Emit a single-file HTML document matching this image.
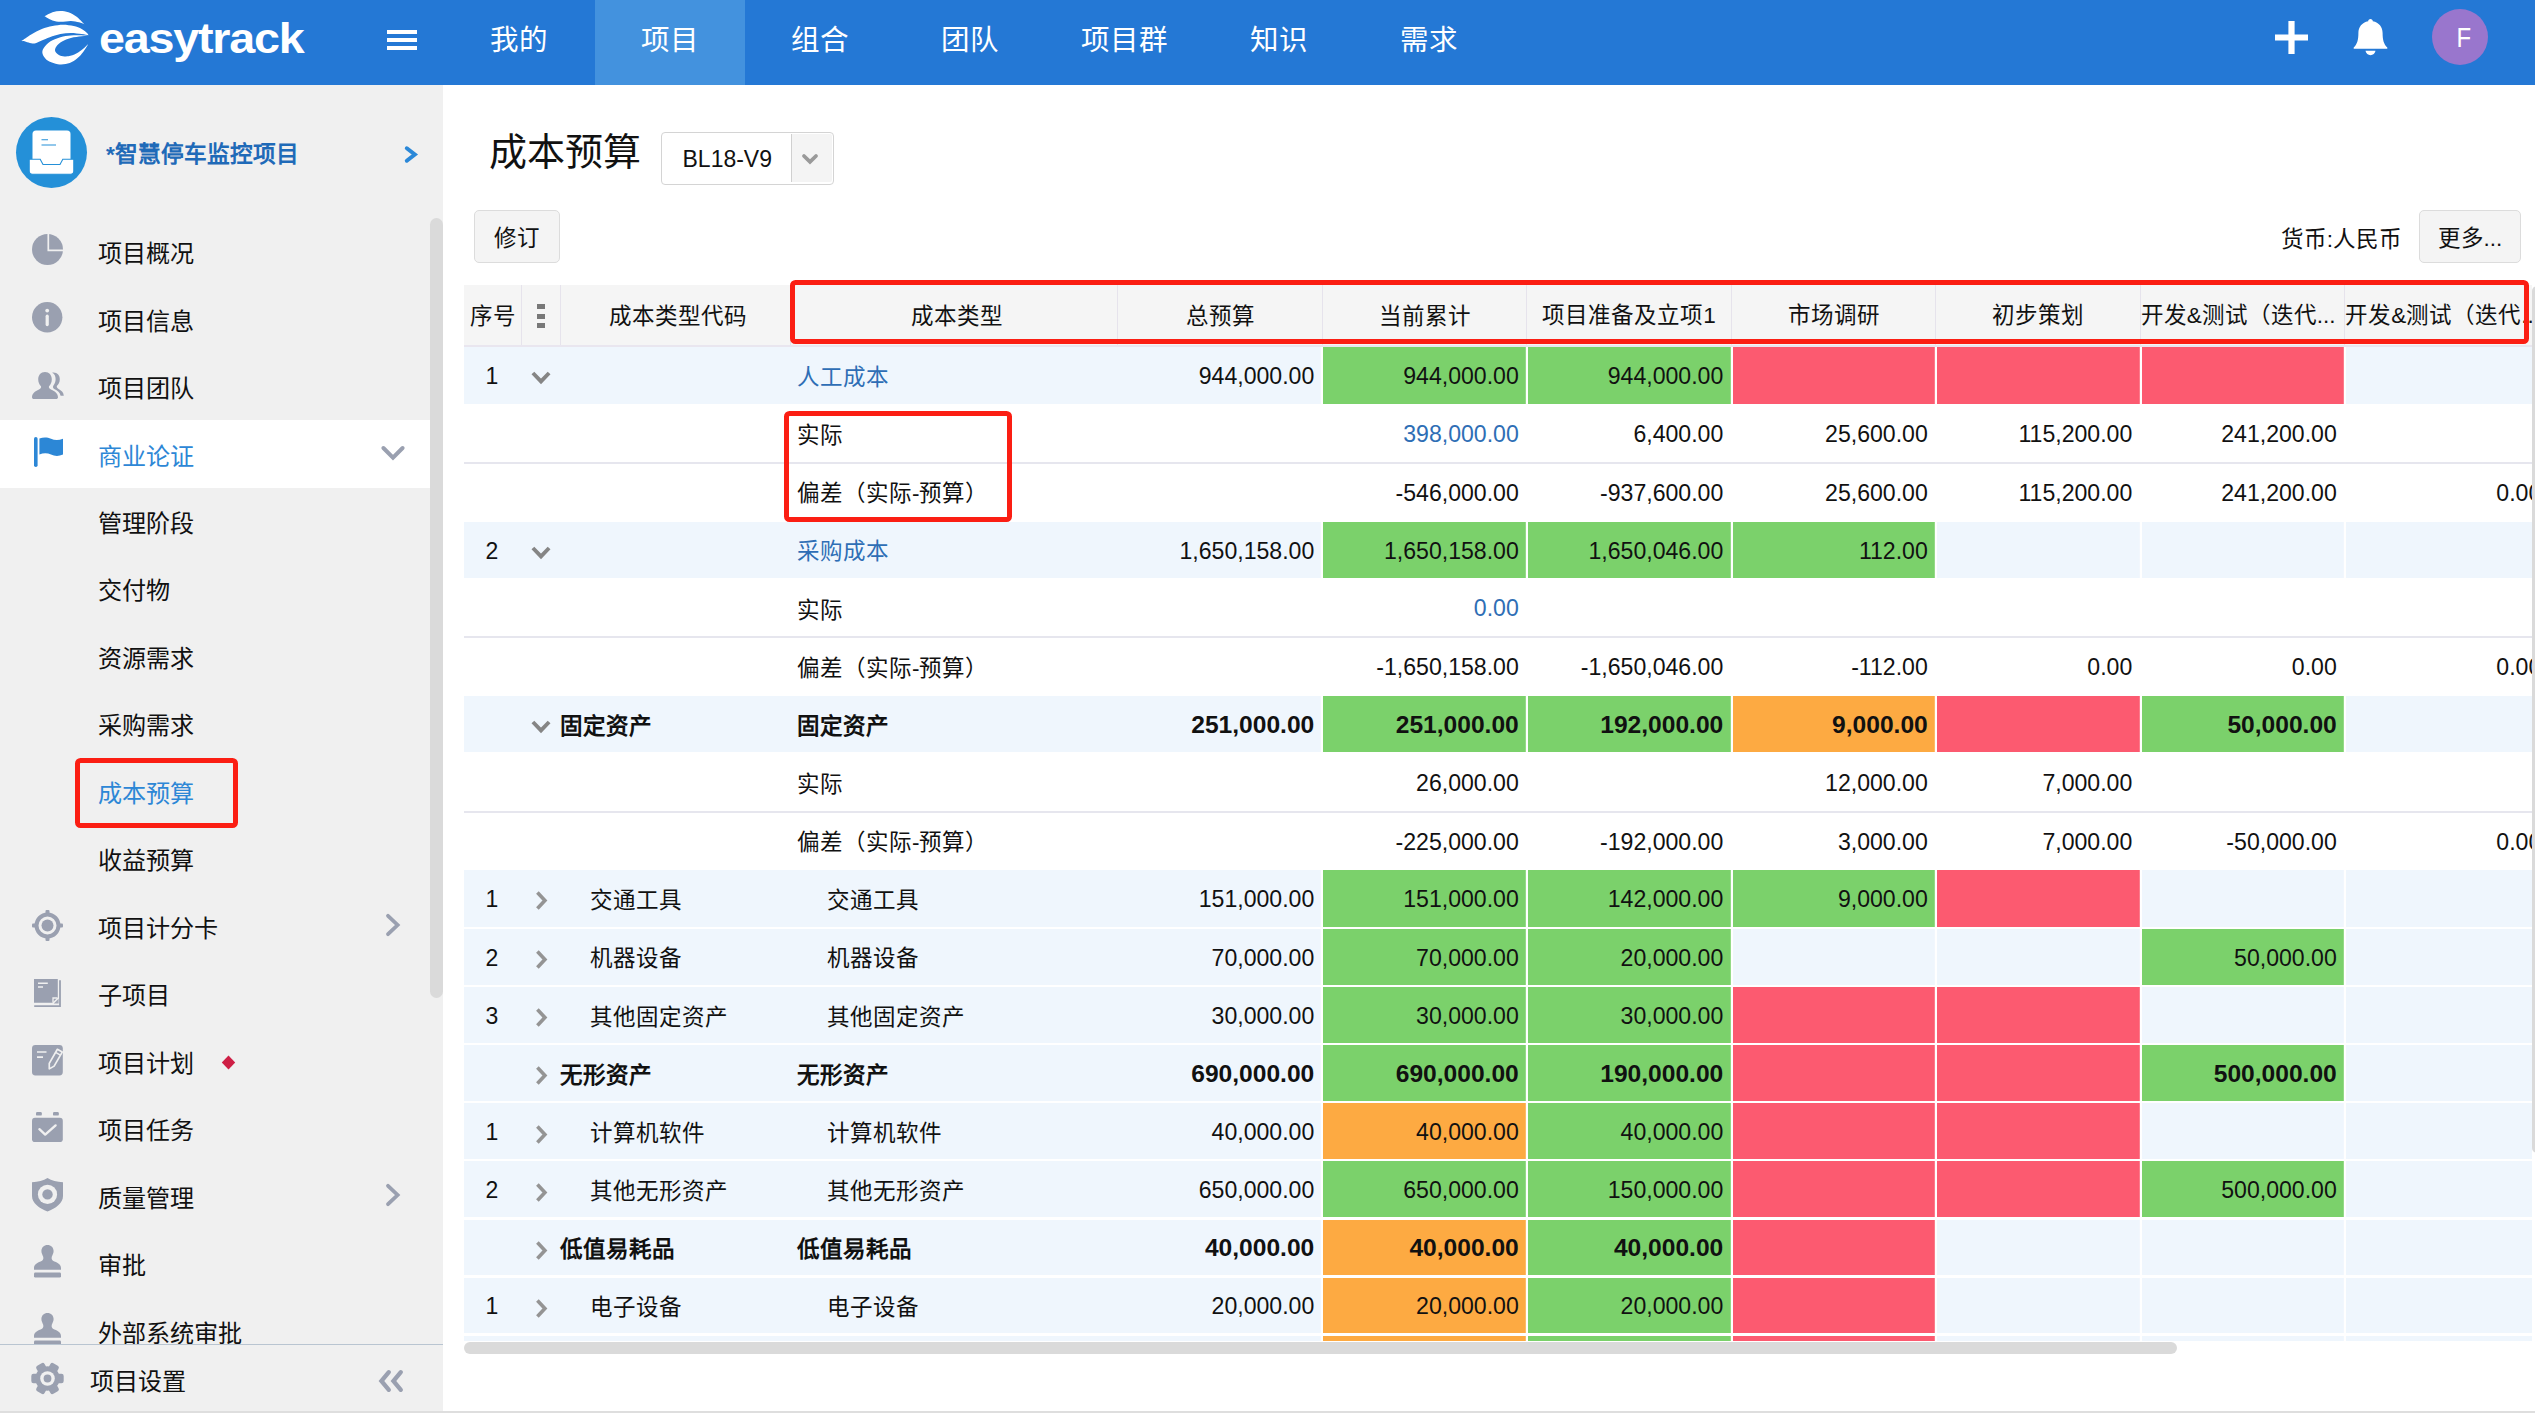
<!DOCTYPE html>
<html lang="zh-CN">
<head>
<meta charset="utf-8">
<title>成本预算</title>
<style>
html,body{margin:0;padding:0}
body{width:2535px;height:1413px;overflow:hidden;background:#fff;position:relative;font-family:"Liberation Sans",sans-serif;color:#111;-webkit-font-smoothing:antialiased}
div,span,i,svg{box-sizing:border-box}
.abs{position:absolute}
/* ---------- header ---------- */
#hdr{position:absolute;left:0;top:0;width:2535px;height:85px;background:#2478d5}
#logotxt{position:absolute;left:98.5px;top:7.5px;height:60px;line-height:60px;font-size:43px;font-weight:bold;color:#fff;letter-spacing:-1.1px;white-space:nowrap;transform:scaleX(1.085);transform-origin:0 50%}
.bar{position:absolute;left:387px;width:30px;height:4px;background:#fff}
.tab{position:absolute;top:0;height:85px;line-height:81.6px;text-align:center;color:#fff;font-size:28.5px;white-space:nowrap}
.tab.on{background:#4392de}
#avatar{position:absolute;left:2432px;top:9px;width:56px;height:56px;border-radius:50%;background:#9976cd;color:#fff;font-size:28.5px;line-height:57px;text-align:center;padding-left:7px}
#avatar span{display:inline-block;transform:scaleX(0.84)}
/* ---------- sidebar ---------- */
#side{position:absolute;left:0;top:85px;width:443px;height:1328px;background:#f0f0f0;overflow:hidden}
#proj{position:absolute;left:16px;top:32px;width:71px;height:71px;border-radius:50%;background:#2490d8}
#projname{position:absolute;left:106px;top:49.3px;height:40px;line-height:40px;font-size:22.7px;font-weight:bold;color:#1f6ab8;white-space:nowrap}
.mi{position:absolute;left:0;width:430px;height:67.46px;line-height:67.46px;font-size:24.1px;color:#111;white-space:nowrap}
.mi span{position:absolute;left:97.6px;top:1.3px}
.mi.on{background:#fff;color:#2d87d6;margin-top:-1.5px;height:68.3px}
.mi.on span{top:2.8px}
.mi.on svg{margin-top:1.5px}
.mi.cur{color:#2d87d6}
.mi svg{position:absolute}
#sscroll{position:absolute;left:430px;top:133px;width:13px;height:780px;border-radius:7px;background:#dadada}
#sfoot{position:absolute;left:0;top:1259px;width:443px;height:69px;background:#f0f0f0;border-top:1.5px solid #b9c5d1;font-size:24.1px;line-height:70px}
#sfoot span{position:absolute;left:90.3px;top:2px}
/* ---------- main ---------- */
#title{position:absolute;left:489px;top:123.7px;height:56px;line-height:56px;font-size:38px;color:#111;white-space:nowrap}
#ver{position:absolute;left:661px;top:132px;width:173px;height:53px;border:1.5px solid #d4d4d4;border-radius:4px;background:#fff}
#ver .t{position:absolute;left:20.5px;top:0;height:50px;line-height:53.2px;font-size:23px;color:#111}
#ver .b{position:absolute;right:0.8px;top:0.8px;width:41.2px;height:48.4px;background:#f4f4f4;border-left:1.5px solid #d0d0d0;border-radius:0 2px 2px 0}
.btn{position:absolute;top:210px;height:53px;border:1.5px solid #dcdcdc;border-radius:5px;background:#f4f4f4;font-size:22.5px;line-height:55.500px;text-align:center;color:#111;white-space:nowrap;overflow:hidden}
#cur{position:absolute;left:2200px;width:202px;top:213.500px;height:52px;line-height:52px;font-size:22.5px;text-align:right;white-space:nowrap;color:#111}
/* ---------- table ---------- */
#tbl{position:absolute;left:464px;top:285px;width:2068px;height:1056px;overflow:hidden;font-size:22.5px}
.thead{position:absolute;left:0;top:0;width:2100px;height:62px;background:#f5f5f5;border-bottom:2.2px solid #e9e6ef}
.th{position:absolute;top:0;height:60px;line-height:64.400px;text-align:center;white-space:nowrap;overflow:hidden;border-left:1.6px solid #e6e3ec}
.th:first-child{border-left:none}
.th.thl{text-align:left;padding-left:0px}
.th.ph{line-height:61px}
.dots{position:absolute;left:73px;top:19px;width:8px}
.dots i{display:block;width:7.5px;height:5px;background:#787878;margin-bottom:4.6px}
.tr{position:absolute;left:0;width:2100px;height:55.8px}
.trb{background:#eff6fd}
.trw{background:#fff}
.trw.ln{border-top:2px solid #e6e6ee;margin-top:-1.800px;height:57.800px}
.td{position:absolute;top:2.6px;height:56px;line-height:56px;white-space:nowrap}
.trw .td{top:2.700px}
.trw .td.num{top:0.300px}
.trw.ln .td{top:2.300px}
.trw.ln .td.num{top:1px}
.seq{left:0;width:56px;text-align:center;font-size:23px;top:0.800px}
.num{text-align:right;padding-right:7.500px;font-size:23.100px;z-index:2;top:0.800px}
.bold .num{font-size:24.600px}
.lk{color:#2e6eb5}
.bold{font-weight:bold}
.cell{position:absolute;top:0;height:100%;border-right:0;z-index:1}
.trb .cell{box-shadow:-2.200px 0 0 #fff}
.cv{position:absolute}
#hscroll{position:absolute;left:464px;top:1341.5px;width:1713px;height:12.5px;border-radius:7px;background:#dadada}
#vclip{position:absolute;left:2532px;top:286px;width:3px;height:867px;overflow:hidden}
#vscroll{position:absolute;left:0;top:0;width:10px;height:867px;border-radius:5px;background:#dadada}
html{overflow:hidden}
.red{position:absolute;border:5px solid #fb1e13;border-radius:5.500px;z-index:9}
#botline{position:absolute;left:0;top:1411px;width:2535px;height:2px;background:#dedede;z-index:10}
</style>
</head>
<body>
<!-- ================= header ================= -->
<div id="hdr">
  <svg class="abs" style="left:20px;top:10px" width="70" height="56" viewBox="20 10 70 56"><path fill="#fff" d="M44.5 16.2C45.8 15.5 49.9 13.1 52.5 12.2C55.1 11.3 57.8 10.9 60.4 10.9C63.0 10.9 65.8 11.3 68.4 12.2C71.1 13.1 73.7 14.5 76.3 16.5C78.9 18.5 83.0 22.9 84.3 24.2C83.4 23.9 81.2 22.8 79.0 22.3C76.8 21.8 74.1 21.1 71.0 21.0C67.9 20.9 63.5 21.9 60.4 21.8C57.3 21.7 55.1 21.3 52.5 20.4C49.9 19.5 45.8 16.9 44.5 16.2Z"/><path fill="#fff" d="M21.4 41.1C23.0 40.0 27.8 36.5 31.2 34.5C34.6 32.5 38.2 30.3 41.8 28.9C45.3 27.5 49.0 26.7 52.5 26.0C56.0 25.3 59.6 24.7 63.1 24.7C66.6 24.7 70.6 25.3 73.7 26.0C76.8 26.7 79.5 27.8 81.7 28.9C83.9 30.0 85.8 31.8 87.0 32.9C88.2 34.0 88.3 34.9 88.6 35.3C87.4 35.1 84.6 34.4 81.7 34.0C78.8 33.6 74.5 32.9 71.0 32.9C67.5 32.9 63.9 33.3 60.4 34.0C56.9 34.7 52.9 36.1 49.8 37.2C46.7 38.3 44.2 39.6 41.8 40.6C39.4 41.6 37.3 42.8 35.5 43.3C33.7 43.8 32.8 43.6 31.2 43.3C29.6 43.0 27.5 42.1 25.9 41.7C24.3 41.3 22.1 41.2 21.4 41.1Z"/><path fill="#fff" d="M88.0 35.6C85.6 35.5 77.9 35.1 73.7 35.3C69.5 35.5 66.6 35.8 63.1 36.6C59.6 37.4 55.3 38.9 52.5 40.3C49.7 41.7 47.8 43.3 46.1 45.1C44.4 46.9 42.8 49.0 42.4 51.0C42.0 53.0 42.9 55.0 44.0 56.8C45.1 58.6 47.0 60.4 49.3 61.6C51.6 62.8 55.1 63.8 57.8 64.2C60.5 64.6 63.1 64.5 65.7 64.0C68.4 63.5 71.2 62.5 73.7 61.0C76.2 59.5 78.6 57.2 80.6 55.2C82.5 53.2 84.1 50.6 85.4 48.8C86.7 46.9 87.8 44.9 88.3 44.1C87.5 44.9 85.2 47.2 83.2 48.8C81.2 50.4 78.8 52.4 76.3 53.6C73.8 54.9 71.1 55.9 68.4 56.3C65.8 56.6 62.5 56.4 60.4 55.7C58.3 55.0 56.4 53.3 55.6 52.0C54.8 50.7 54.8 49.4 55.6 47.8C56.4 46.2 58.3 44.0 60.4 42.5C62.5 41.0 65.3 39.7 68.4 38.7C71.5 37.7 75.7 37.1 79.0 36.6C82.3 36.1 86.5 35.8 88.0 35.6Z"/></svg>
  <div id="logotxt">easytrack</div>
  <div class="bar" style="top:30px"></div><div class="bar" style="top:38px"></div><div class="bar" style="top:46px"></div>
  <div class="tab" style="left:444px;width:150px">我的</div>
  <div class="tab on" style="left:595px;width:150px">项目</div>
  <div class="tab" style="left:745px;width:150px">组合</div>
  <div class="tab" style="left:895px;width:150px">团队</div>
  <div class="tab" style="left:1045px;width:159px">项目群</div>
  <div class="tab" style="left:1204px;width:150px">知识</div>
  <div class="tab" style="left:1354px;width:150px">需求</div>
  <svg class="abs" style="left:2275px;top:21px" width="33" height="33" viewBox="0 0 33 33"><path fill="#fff" d="M13.4 0h6.2v13.4H33v6.2H19.6V33h-6.2V19.6H0v-6.2h13.4z"/></svg>
  <svg class="abs" style="left:2353px;top:18px" width="35" height="39" viewBox="0 0 35 39">
    <path fill="#fff" d="M17.5 1 C18.8 1 19.8 2 19.8 3.2 C26 4.4 29.6 9 29.6 15 C29.6 21.5 30.6 26 34.3 29.6 L34.3 30.8 L0.7 30.8 L0.7 29.6 C4.4 26 5.4 21.5 5.4 15 C5.4 9 9 4.4 15.2 3.2 C15.2 2 16.2 1 17.5 1 Z"/>
    <path fill="#fff" d="M12.5 32.8 L22.5 32.8 C22 35.5 20 37.2 17.5 37.2 C15 37.2 13 35.5 12.5 32.8 Z"/>
  </svg>
  <div id="avatar"><span>F</span></div>
</div>
<!-- ================= sidebar ================= -->
<div id="side">
  <div id="proj">
    <svg class="abs" style="left:12px;top:12px" width="47" height="47" viewBox="0 0 47 47">
      <path fill="#fff" d="M8 1.5 h31 a3.5 3.5 0 0 1 3.500 3.500 V40 H4.500 V5 a3.500 3.500 0 0 1 3.500 -3.500 Z"/>
      <path fill="#2490d8" d="M13.500 10.200 h6.500 v1 h-6.500z M13.500 15.500 h14.500 v1 h-14.500z"/>
      <path fill="#fff" stroke="#2490d8" stroke-width="1.1" d="M1.200 30.200 H12.200 L15 35.500 H32 L34.800 30.200 H45.800 V42 a3.200 3.200 0 0 1 -3.200 3.200 H4.400 a3.200 3.200 0 0 1 -3.200 -3.200 Z"/>
    </svg>
  </div>
  <div id="projname">*智慧停车监控项目</div>
  <svg class="abs" style="left:402px;top:59px" width="20" height="22" viewBox="0 0 20 22"><path d="M4.8 4.25 L12.8 10.5 L4.8 16.75" fill="none" stroke="#2b88d8" stroke-width="4" stroke-linecap="round" stroke-linejoin="miter"/></svg>
  <div class="mi " style="top:133.90px"><svg style="left:32.3px;top:15.3px" width="32" height="32" viewBox="0 0 32 32"><circle cx="15.5" cy="15.5" r="15.5" fill="#9aa0b0"/><path d="M16.3 0 V16.4 H31.5" fill="none" stroke="#f0f0f0" stroke-width="1.7"/></svg><span>项目概况</span></div>
<div class="mi " style="top:201.36px"><svg style="left:32.3px;top:15.8px" width="31" height="31" viewBox="0 0 31 31"><circle cx="15.2" cy="15.2" r="15.2" fill="#9aa0b0"/><circle cx="15.2" cy="8.6" r="1.9" fill="#f0f0f0"/><rect x="13.6" y="12.6" width="3.2" height="11.6" rx="1.6" fill="#f0f0f0"/></svg><span>项目信息</span></div>
<div class="mi " style="top:268.82px"><svg style="left:31.7px;top:18.1px" width="32" height="27" viewBox="0 0 32 27"><g fill="#9aa0b0"><path d="M21.4 0.6 C25.6 0.6 27.8 3.6 27.8 7.2 C27.8 10.4 26.4 12.6 24.8 14 C24.6 15.4 25.4 16.4 27 17.3 C29.6 18.7 31.6 20.5 31.8 23.8 L28.6 23.8 C28 20.6 25.6 18.6 22.2 17 C20.8 16.2 20.6 14.6 21.6 13.2 C23 11.2 23.6 9.4 23.6 7 C23.6 4.2 22.6 2 20.2 0.8 C20.6 0.7 21 0.6 21.4 0.6 Z"/><path d="M13 0 C17.2 0 19.8 3.2 19.8 7.2 C19.8 10.2 18.6 12.6 17 14.2 C16.6 15.6 17.2 16.6 19 17.4 C23.2 19.2 26 21.4 26 25.2 C26 26.4 25.2 27 24 27 L2 27 C0.8 27 0 26.4 0 25.2 C0 21.4 2.8 19.2 7 17.4 C8.8 16.6 9.4 15.6 9 14.2 C7.4 12.6 6.2 10.2 6.2 7.2 C6.2 3.2 8.8 0 13 0 Z"/></g></svg><span>项目团队</span></div>
<div class="mi on" style="top:336.28px"><svg style="left:34px;top:15.6px" width="29" height="30" viewBox="0 0 29 30"><rect x="0" y="0" width="3.6" height="30" rx="1.8" fill="#2c87d6"/><path fill="#2c87d6" d="M5.4 1.6 C9.5 -0.2 13.5 0.2 17 1.8 C20.5 3.4 24.5 3.6 29 1.8 L29 17.6 C24.5 19.6 20.5 19.2 17 17.6 C13.5 16 9.5 15.8 5.4 17.6 Z"/></svg><svg style="left:380px;top:23.7px" width="26" height="17" viewBox="0 0 26 17"><path d="M3.400 3 L13 12.600 L22.600 3" fill="none" stroke="#9aa0b0" stroke-width="4" stroke-linecap="round" stroke-linejoin="miter"/></svg><span>商业论证</span></div>
<div class="mi " style="top:403.74px"><span>管理阶段</span></div>
<div class="mi " style="top:471.20px"><span>交付物</span></div>
<div class="mi " style="top:538.66px"><span>资源需求</span></div>
<div class="mi " style="top:606.12px"><span>采购需求</span></div>
<div class="mi cur" style="top:673.58px"><span>成本预算</span></div>
<div class="mi " style="top:741.04px"><span>收益预算</span></div>
<div class="mi " style="top:808.50px"><svg style="left:32.2px;top:16.3px" width="31" height="31" viewBox="0 0 31 31"><circle cx="15.5" cy="15.5" r="11" fill="none" stroke="#9aa0b0" stroke-width="4"/><circle cx="15.5" cy="15.5" r="6" fill="#9aa0b0"/><g fill="#9aa0b0"><rect x="13.5" y="0" width="4" height="4" rx="1"/><rect x="13.5" y="27" width="4" height="4" rx="1"/><rect x="0" y="13.5" width="4" height="4" rx="1"/><rect x="27" y="13.5" width="4" height="4" rx="1"/></g></svg><svg style="left:385px;top:19.5px" width="17" height="24" viewBox="0 0 17 24"><path d="M3 2.800 L12.600 12 L3 21.200" fill="none" stroke="#9aa0b0" stroke-width="3.800" stroke-linecap="round" stroke-linejoin="miter"/></svg><span>项目计分卡</span></div>
<div class="mi " style="top:875.96px"><svg style="left:34px;top:17.8px" width="27.5" height="28.5" viewBox="0 0 27.5 28.5"><path fill="#9aa0b0" d="M0 0 H23.8 V18.4 L18.4 23.8 H0 Z"/><path fill="#9aa0b0" d="M19.8 24.6 L24.6 19.8 L24.6 24.6 Z" opacity="0.9"/><path fill="none" stroke="#f0f0f0" stroke-width="1.3" d="M19 23.5 V19 H23.5"/><path d="M4 4.2 H13.8 M4 8 H9" stroke="#f0f0f0" stroke-width="1.5" fill="none"/><path d="M26 1.2 V27.2 H0.2" stroke="#9aa0b0" stroke-width="1.8" fill="none"/></svg><span>子项目</span></div>
<div class="mi " style="top:943.42px"><svg style="left:32.3px;top:16.6px" width="31" height="31" viewBox="0 0 31 31"><rect x="0" y="0" width="30.8" height="30.4" rx="3.4" fill="#9aa0b0"/><path d="M5 7 H14.5 M5 12.2 H11" stroke="#f0f0f0" stroke-width="1.7" fill="none"/><g transform="rotate(30 23 14)"><path d="M20.2 4.4 h5.6 v16.2 l-2.8 4.8 l-2.8 -4.8 Z" fill="#9aa0b0" stroke="#f0f0f0" stroke-width="1.7" stroke-linejoin="round"/><path d="M20.2 8 h5.6" stroke="#f0f0f0" stroke-width="1.4"/></g></svg><svg style="left:220.500px;top:26.500px" width="15" height="15" viewBox="0 0 15 15"><path d="M7.500 0.400 L14.200 7.500 L7.500 14.600 L0.800 7.500 Z" fill="#ce1f45"/></svg><span>项目计划</span></div>
<div class="mi " style="top:1010.88px"><svg style="left:32.3px;top:16.1px" width="31" height="30.5" viewBox="0 0 31 30.5"><rect x="0" y="5.8" width="30.8" height="24.4" rx="3" fill="#9aa0b0"/><rect x="4" y="0" width="5.8" height="3.6" rx="1.2" fill="#9aa0b0"/><rect x="21" y="0" width="5.8" height="3.6" rx="1.2" fill="#9aa0b0"/><path d="M7.4 17.2 L13.2 22.6 L23.6 13.4" fill="none" stroke="#f0f0f0" stroke-width="2.4" stroke-linecap="round" stroke-linejoin="round"/></svg><span>项目任务</span></div>
<div class="mi " style="top:1078.34px"><svg style="left:32px;top:15px" width="31" height="34" viewBox="0 0 31 34"><path fill="#9aa0b0" d="M15.5 0 C19.5 2.6 25 4 31 4.2 V18 C31 25.4 23.5 30.4 15.5 33.6 C7.5 30.4 0 25.4 0 18 V4.2 C6 4 11.500 2.600 15.500 0 Z"/><circle cx="15.500" cy="16.400" r="9.600" fill="#f0f0f0"/><circle cx="15.500" cy="16.400" r="5.200" fill="#9aa0b0"/></svg><svg style="left:385px;top:19.5px" width="17" height="24" viewBox="0 0 17 24"><path d="M3 2.800 L12.600 12 L3 21.200" fill="none" stroke="#9aa0b0" stroke-width="3.800" stroke-linecap="round" stroke-linejoin="miter"/></svg><span>质量管理</span></div>
<div class="mi " style="top:1145.80px"><svg style="left:34px;top:14.1px" width="27" height="33" viewBox="0 0 27 33"><path fill="#9aa0b0" d="M13.500 0 C17 0 19.600 2.600 19.600 6 C19.600 8.400 18.400 10 17.800 11.800 C17.200 14 18 15.600 20.400 16.600 C24.600 18.200 27 19.800 27 23.400 V24.800 H0 V23.400 C0 19.800 2.400 18.200 6.600 16.600 C9 15.600 9.800 14 9.200 11.800 C8.600 10 7.400 8.400 7.400 6 C7.400 2.600 10 0 13.500 0 Z"/><rect x="0" y="27.400" width="27" height="5.200" rx="1.400" fill="#9aa0b0"/></svg><span>审批</span></div>
<div class="mi " style="top:1213.26px"><svg style="left:34px;top:14.6px" width="27" height="33" viewBox="0 0 27 33"><path fill="#9aa0b0" d="M13.500 0 C17 0 19.600 2.600 19.600 6 C19.600 8.400 18.400 10 17.800 11.800 C17.200 14 18 15.600 20.400 16.600 C24.600 18.200 27 19.800 27 23.400 V24.800 H0 V23.400 C0 19.800 2.400 18.200 6.600 16.600 C9 15.600 9.800 14 9.200 11.800 C8.600 10 7.400 8.400 7.400 6 C7.400 2.600 10 0 13.500 0 Z"/><rect x="0" y="27.400" width="27" height="5.200" rx="1.400" fill="#9aa0b0"/></svg><span>外部系统审批</span></div>
  <div id="sscroll"></div>
  <div id="sfoot">
    <svg class="abs" style="left:31px;top:17px" width="33" height="33" viewBox="0 0 33 33">
      <g fill="#9aa0b0" transform="rotate(30 16.5 16.5)"><circle cx="16.500" cy="16.500" r="12.200"/>
      <g id="gt"><rect x="11.800" y="0.300" width="9.400" height="9" rx="2.200"/></g>
      <use href="#gt" transform="rotate(60 16.500 16.500)"/><use href="#gt" transform="rotate(120 16.500 16.500)"/><use href="#gt" transform="rotate(180 16.500 16.500)"/><use href="#gt" transform="rotate(240 16.500 16.500)"/><use href="#gt" transform="rotate(300 16.500 16.500)"/></g>
      <circle cx="16.500" cy="16.500" r="7.300" fill="#f0f0f0"/><circle cx="16.500" cy="16.500" r="3.900" fill="#9aa0b0"/>
    </svg>
    <span>项目设置</span>
    <svg class="abs" style="left:377px;top:23px" width="28" height="26" viewBox="0 0 28 26"><path d="M11.8 4.2 L4.4 13 L11.8 21.8 M23.8 4.2 L16.400 13 L23.800 21.800" fill="none" stroke="#9aa0b0" stroke-width="4.300" stroke-linecap="round" stroke-linejoin="miter"/></svg>
  </div>
</div>
<!-- ================= main ================= -->
<div id="title">成本预算</div>
<div id="ver"><div class="t">BL18-V9</div><div class="b"><svg class="abs" style="left:9.000px;top:18.800px" width="18" height="13" viewBox="0 0 18 13"><path d="M3 3 L9 8.800 L15 3" fill="none" stroke="#9a9a9a" stroke-width="3.800" stroke-linecap="round"/></svg></div></div>
<div class="btn" style="left:474px;width:86px">修订</div>
<div id="cur">货币:人民币</div>
<div class="btn" style="left:2419px;width:102px">更多...</div>
<div id="tbl">
<div class="thead">
<div class="th" style="left:0.0px;width:57.0px">序号</div>
<div class="th" style="left:57.0px;width:39.0px"></div>
<div class="th" style="left:96.0px;width:230.0px;padding-left:4.6px">成本类型代码</div>
<div class="th" style="left:326.0px;width:327.3px;padding-left:5.4px">成本类型</div>
<div class="th" style="left:653.3px;width:204.5px">总预算</div>
<div class="th" style="left:857.8px;width:204.5px">当前累计</div>
<div class="th ph" style="left:1062.3px;width:204.5px">项目准备及立项1</div>
<div class="th ph" style="left:1266.8px;width:204.5px">市场调研</div>
<div class="th ph" style="left:1471.3px;width:204.5px">初步策划</div>
<div class="th thl ph" style="left:1675.8px;width:204.5px">开发&amp;测试（迭代...</div>
<div class="th thl ph" style="left:1880.3px;width:204.5px">开发&amp;测试（迭代...</div>
<div class="dots"><i></i><i></i><i></i></div>
</div>
<div class="tr trb" style="top:62.00px;height:56.8px">
<div class="td seq">1</div>
<svg class="cv" style="left:66.89999999999998px;top:24.0px" width="20" height="14" viewBox="0 0 20 14"><path d="M1.9 2.0 L10 10.4 L18.1 2.0" fill="none" stroke="#858585" stroke-width="3.9" stroke-linecap="butt" stroke-linejoin="miter"/></svg>
<div class="td type lk" style="left:333px">人工成本</div>
<div class="td num" style="left:653.3px;width:204.5px">944,000.00</div>
<div class="cell" style="left:858.8px;width:203.3px;background:#7bd16b;"></div>
<div class="td num " style="left:857.8px;width:204.5px">944,000.00</div>
<div class="cell" style="left:1064.1px;width:202.5px;background:#7bd16b;"></div>
<div class="td num " style="left:1062.3px;width:204.5px">944,000.00</div>
<div class="cell" style="left:1268.6px;width:202.5px;background:#fc5a70;"></div>
<div class="cell" style="left:1473.1px;width:202.5px;background:#fc5a70;"></div>
<div class="cell" style="left:1677.6px;width:202.5px;background:#fc5a70;"></div>
<div class="cell" style="left:1882.1px;width:202.5px;"></div>
</div>
<div class="tr trw" style="top:120.45px">
<div class="td type" style="left:333px">实际</div>
<div class="td num lk" style="left:857.8px;width:204.5px">398,000.00</div>
<div class="td num " style="left:1062.3px;width:204.5px">6,400.00</div>
<div class="td num " style="left:1266.8px;width:204.5px">25,600.00</div>
<div class="td num " style="left:1471.3px;width:204.5px">115,200.00</div>
<div class="td num " style="left:1675.8px;width:204.5px">241,200.00</div>
</div>
<div class="tr trw ln" style="top:178.60px">
<div class="td type" style="left:333px">偏差（实际-预算）</div>
<div class="td num " style="left:857.8px;width:204.5px">-546,000.00</div>
<div class="td num " style="left:1062.3px;width:204.5px">-937,600.00</div>
<div class="td num " style="left:1266.8px;width:204.5px">25,600.00</div>
<div class="td num " style="left:1471.3px;width:204.5px">115,200.00</div>
<div class="td num " style="left:1675.8px;width:204.5px">241,200.00</div>
<div class="td num " style="left:1880.3px;width:204.5px">0.00</div>
</div>
<div class="tr trb" style="top:236.75px">
<div class="td seq">2</div>
<svg class="cv" style="left:66.89999999999998px;top:24.0px" width="20" height="14" viewBox="0 0 20 14"><path d="M1.9 2.0 L10 10.4 L18.1 2.0" fill="none" stroke="#858585" stroke-width="3.9" stroke-linecap="butt" stroke-linejoin="miter"/></svg>
<div class="td type lk" style="left:333px">采购成本</div>
<div class="td num" style="left:653.3px;width:204.5px">1,650,158.00</div>
<div class="cell" style="left:858.8px;width:203.3px;background:#7bd16b;"></div>
<div class="td num " style="left:857.8px;width:204.5px">1,650,158.00</div>
<div class="cell" style="left:1064.1px;width:202.5px;background:#7bd16b;"></div>
<div class="td num " style="left:1062.3px;width:204.5px">1,650,046.00</div>
<div class="cell" style="left:1268.6px;width:202.5px;background:#7bd16b;"></div>
<div class="td num " style="left:1266.8px;width:204.5px">112.00</div>
<div class="cell" style="left:1473.1px;width:202.5px;"></div>
<div class="cell" style="left:1677.6px;width:202.5px;"></div>
<div class="cell" style="left:1882.1px;width:202.5px;"></div>
</div>
<div class="tr trw" style="top:294.90px">
<div class="td type" style="left:333px">实际</div>
<div class="td num lk" style="left:857.8px;width:204.5px">0.00</div>
</div>
<div class="tr trw ln" style="top:353.05px">
<div class="td type" style="left:333px">偏差（实际-预算）</div>
<div class="td num " style="left:857.8px;width:204.5px">-1,650,158.00</div>
<div class="td num " style="left:1062.3px;width:204.5px">-1,650,046.00</div>
<div class="td num " style="left:1266.8px;width:204.5px">-112.00</div>
<div class="td num " style="left:1471.3px;width:204.5px">0.00</div>
<div class="td num " style="left:1675.8px;width:204.5px">0.00</div>
<div class="td num " style="left:1880.3px;width:204.5px">0.00</div>
</div>
<div class="tr trb bold" style="top:411.20px">
<svg class="cv" style="left:66.89999999999998px;top:24.0px" width="20" height="14" viewBox="0 0 20 14"><path d="M1.9 2.0 L10 10.4 L18.1 2.0" fill="none" stroke="#858585" stroke-width="3.9" stroke-linecap="butt" stroke-linejoin="miter"/></svg>
<div class="td code" style="left:95.7px">固定资产</div>
<div class="td type" style="left:333px">固定资产</div>
<div class="td num" style="left:653.3px;width:204.5px">251,000.00</div>
<div class="cell" style="left:858.8px;width:203.3px;background:#7bd16b;"></div>
<div class="td num " style="left:857.8px;width:204.5px">251,000.00</div>
<div class="cell" style="left:1064.1px;width:202.5px;background:#7bd16b;"></div>
<div class="td num " style="left:1062.3px;width:204.5px">192,000.00</div>
<div class="cell" style="left:1268.6px;width:202.5px;background:#fdaa42;"></div>
<div class="td num " style="left:1266.8px;width:204.5px">9,000.00</div>
<div class="cell" style="left:1473.1px;width:202.5px;background:#fc5a70;"></div>
<div class="cell" style="left:1677.6px;width:202.5px;background:#7bd16b;"></div>
<div class="td num " style="left:1675.8px;width:204.5px">50,000.00</div>
<div class="cell" style="left:1882.1px;width:202.5px;"></div>
</div>
<div class="tr trw" style="top:469.35px">
<div class="td type" style="left:333px">实际</div>
<div class="td num " style="left:857.8px;width:204.5px">26,000.00</div>
<div class="td num " style="left:1266.8px;width:204.5px">12,000.00</div>
<div class="td num " style="left:1471.3px;width:204.5px">7,000.00</div>
</div>
<div class="tr trw ln" style="top:527.50px">
<div class="td type" style="left:333px">偏差（实际-预算）</div>
<div class="td num " style="left:857.8px;width:204.5px">-225,000.00</div>
<div class="td num " style="left:1062.3px;width:204.5px">-192,000.00</div>
<div class="td num " style="left:1266.8px;width:204.5px">3,000.00</div>
<div class="td num " style="left:1471.3px;width:204.5px">7,000.00</div>
<div class="td num " style="left:1675.8px;width:204.5px">-50,000.00</div>
<div class="td num " style="left:1880.3px;width:204.5px">0.00</div>
</div>
<div class="tr trb" style="top:585.05px;height:57.2px">
<div class="td seq">1</div>
<svg class="cv" style="left:70.70000000000005px;top:21.4px" width="13" height="19" viewBox="0 0 13 19"><path d="M2.4 1.5 L9.9 9.5 L2.4 17.5" fill="none" stroke="#949494" stroke-width="3.6" stroke-linecap="butt" stroke-linejoin="miter"/></svg>
<div class="td code" style="left:125.7px">交通工具</div>
<div class="td type" style="left:363px">交通工具</div>
<div class="td num" style="left:653.3px;width:204.5px">151,000.00</div>
<div class="cell" style="left:858.8px;width:203.3px;background:#7bd16b;"></div>
<div class="td num " style="left:857.8px;width:204.5px">151,000.00</div>
<div class="cell" style="left:1064.1px;width:202.5px;background:#7bd16b;"></div>
<div class="td num " style="left:1062.3px;width:204.5px">142,000.00</div>
<div class="cell" style="left:1268.6px;width:202.5px;background:#7bd16b;"></div>
<div class="td num " style="left:1266.8px;width:204.5px">9,000.00</div>
<div class="cell" style="left:1473.1px;width:202.5px;background:#fc5a70;"></div>
<div class="cell" style="left:1677.6px;width:202.5px;"></div>
<div class="cell" style="left:1882.1px;width:202.5px;"></div>
</div>
<div class="tr trb" style="top:643.80px">
<div class="td seq">2</div>
<svg class="cv" style="left:70.70000000000005px;top:21.4px" width="13" height="19" viewBox="0 0 13 19"><path d="M2.4 1.5 L9.9 9.5 L2.4 17.5" fill="none" stroke="#949494" stroke-width="3.6" stroke-linecap="butt" stroke-linejoin="miter"/></svg>
<div class="td code" style="left:125.7px">机器设备</div>
<div class="td type" style="left:363px">机器设备</div>
<div class="td num" style="left:653.3px;width:204.5px">70,000.00</div>
<div class="cell" style="left:858.8px;width:203.3px;background:#7bd16b;"></div>
<div class="td num " style="left:857.8px;width:204.5px">70,000.00</div>
<div class="cell" style="left:1064.1px;width:202.5px;background:#7bd16b;"></div>
<div class="td num " style="left:1062.3px;width:204.5px">20,000.00</div>
<div class="cell" style="left:1268.6px;width:202.5px;"></div>
<div class="cell" style="left:1473.1px;width:202.5px;"></div>
<div class="cell" style="left:1677.6px;width:202.5px;background:#7bd16b;"></div>
<div class="td num " style="left:1675.8px;width:204.5px">50,000.00</div>
<div class="cell" style="left:1882.1px;width:202.5px;"></div>
</div>
<div class="tr trb" style="top:701.95px">
<div class="td seq">3</div>
<svg class="cv" style="left:70.70000000000005px;top:21.4px" width="13" height="19" viewBox="0 0 13 19"><path d="M2.4 1.5 L9.9 9.5 L2.4 17.5" fill="none" stroke="#949494" stroke-width="3.6" stroke-linecap="butt" stroke-linejoin="miter"/></svg>
<div class="td code" style="left:125.7px">其他固定资产</div>
<div class="td type" style="left:363px">其他固定资产</div>
<div class="td num" style="left:653.3px;width:204.5px">30,000.00</div>
<div class="cell" style="left:858.8px;width:203.3px;background:#7bd16b;"></div>
<div class="td num " style="left:857.8px;width:204.5px">30,000.00</div>
<div class="cell" style="left:1064.1px;width:202.5px;background:#7bd16b;"></div>
<div class="td num " style="left:1062.3px;width:204.5px">30,000.00</div>
<div class="cell" style="left:1268.6px;width:202.5px;background:#fc5a70;"></div>
<div class="cell" style="left:1473.1px;width:202.5px;background:#fc5a70;"></div>
<div class="cell" style="left:1677.6px;width:202.5px;"></div>
<div class="cell" style="left:1882.1px;width:202.5px;"></div>
</div>
<div class="tr trb bold" style="top:760.10px">
<svg class="cv" style="left:70.70000000000005px;top:21.4px" width="13" height="19" viewBox="0 0 13 19"><path d="M2.4 1.5 L9.9 9.5 L2.4 17.5" fill="none" stroke="#949494" stroke-width="3.6" stroke-linecap="butt" stroke-linejoin="miter"/></svg>
<div class="td code" style="left:95.7px">无形资产</div>
<div class="td type" style="left:333px">无形资产</div>
<div class="td num" style="left:653.3px;width:204.5px">690,000.00</div>
<div class="cell" style="left:858.8px;width:203.3px;background:#7bd16b;"></div>
<div class="td num " style="left:857.8px;width:204.5px">690,000.00</div>
<div class="cell" style="left:1064.1px;width:202.5px;background:#7bd16b;"></div>
<div class="td num " style="left:1062.3px;width:204.5px">190,000.00</div>
<div class="cell" style="left:1268.6px;width:202.5px;background:#fc5a70;"></div>
<div class="cell" style="left:1473.1px;width:202.5px;background:#fc5a70;"></div>
<div class="cell" style="left:1677.6px;width:202.5px;background:#7bd16b;"></div>
<div class="td num " style="left:1675.8px;width:204.5px">500,000.00</div>
<div class="cell" style="left:1882.1px;width:202.5px;"></div>
</div>
<div class="tr trb" style="top:818.25px">
<div class="td seq">1</div>
<svg class="cv" style="left:70.70000000000005px;top:21.4px" width="13" height="19" viewBox="0 0 13 19"><path d="M2.4 1.5 L9.9 9.5 L2.4 17.5" fill="none" stroke="#949494" stroke-width="3.6" stroke-linecap="butt" stroke-linejoin="miter"/></svg>
<div class="td code" style="left:125.7px">计算机软件</div>
<div class="td type" style="left:363px">计算机软件</div>
<div class="td num" style="left:653.3px;width:204.5px">40,000.00</div>
<div class="cell" style="left:858.8px;width:203.3px;background:#fdaa42;"></div>
<div class="td num " style="left:857.8px;width:204.5px">40,000.00</div>
<div class="cell" style="left:1064.1px;width:202.5px;background:#7bd16b;"></div>
<div class="td num " style="left:1062.3px;width:204.5px">40,000.00</div>
<div class="cell" style="left:1268.6px;width:202.5px;background:#fc5a70;"></div>
<div class="cell" style="left:1473.1px;width:202.5px;background:#fc5a70;"></div>
<div class="cell" style="left:1677.6px;width:202.5px;"></div>
<div class="cell" style="left:1882.1px;width:202.5px;"></div>
</div>
<div class="tr trb" style="top:876.40px">
<div class="td seq">2</div>
<svg class="cv" style="left:70.70000000000005px;top:21.4px" width="13" height="19" viewBox="0 0 13 19"><path d="M2.4 1.5 L9.9 9.5 L2.4 17.5" fill="none" stroke="#949494" stroke-width="3.6" stroke-linecap="butt" stroke-linejoin="miter"/></svg>
<div class="td code" style="left:125.7px">其他无形资产</div>
<div class="td type" style="left:363px">其他无形资产</div>
<div class="td num" style="left:653.3px;width:204.5px">650,000.00</div>
<div class="cell" style="left:858.8px;width:203.3px;background:#7bd16b;"></div>
<div class="td num " style="left:857.8px;width:204.5px">650,000.00</div>
<div class="cell" style="left:1064.1px;width:202.5px;background:#7bd16b;"></div>
<div class="td num " style="left:1062.3px;width:204.5px">150,000.00</div>
<div class="cell" style="left:1268.6px;width:202.5px;background:#fc5a70;"></div>
<div class="cell" style="left:1473.1px;width:202.5px;background:#fc5a70;"></div>
<div class="cell" style="left:1677.6px;width:202.5px;background:#7bd16b;"></div>
<div class="td num " style="left:1675.8px;width:204.5px">500,000.00</div>
<div class="cell" style="left:1882.1px;width:202.5px;"></div>
</div>
<div class="tr trb bold" style="top:934.55px">
<svg class="cv" style="left:70.70000000000005px;top:21.4px" width="13" height="19" viewBox="0 0 13 19"><path d="M2.4 1.5 L9.9 9.5 L2.4 17.5" fill="none" stroke="#949494" stroke-width="3.6" stroke-linecap="butt" stroke-linejoin="miter"/></svg>
<div class="td code" style="left:95.7px">低值易耗品</div>
<div class="td type" style="left:333px">低值易耗品</div>
<div class="td num" style="left:653.3px;width:204.5px">40,000.00</div>
<div class="cell" style="left:858.8px;width:203.3px;background:#fdaa42;"></div>
<div class="td num " style="left:857.8px;width:204.5px">40,000.00</div>
<div class="cell" style="left:1064.1px;width:202.5px;background:#7bd16b;"></div>
<div class="td num " style="left:1062.3px;width:204.5px">40,000.00</div>
<div class="cell" style="left:1268.6px;width:202.5px;background:#fc5a70;"></div>
<div class="cell" style="left:1473.1px;width:202.5px;"></div>
<div class="cell" style="left:1677.6px;width:202.5px;"></div>
<div class="cell" style="left:1882.1px;width:202.5px;"></div>
</div>
<div class="tr trb" style="top:992.70px">
<div class="td seq">1</div>
<svg class="cv" style="left:70.70000000000005px;top:21.4px" width="13" height="19" viewBox="0 0 13 19"><path d="M2.4 1.5 L9.9 9.5 L2.4 17.5" fill="none" stroke="#949494" stroke-width="3.6" stroke-linecap="butt" stroke-linejoin="miter"/></svg>
<div class="td code" style="left:125.7px">电子设备</div>
<div class="td type" style="left:363px">电子设备</div>
<div class="td num" style="left:653.3px;width:204.5px">20,000.00</div>
<div class="cell" style="left:858.8px;width:203.3px;background:#fdaa42;"></div>
<div class="td num " style="left:857.8px;width:204.5px">20,000.00</div>
<div class="cell" style="left:1064.1px;width:202.5px;background:#7bd16b;"></div>
<div class="td num " style="left:1062.3px;width:204.5px">20,000.00</div>
<div class="cell" style="left:1268.6px;width:202.5px;background:#fc5a70;"></div>
<div class="cell" style="left:1473.1px;width:202.5px;"></div>
<div class="cell" style="left:1677.6px;width:202.5px;"></div>
<div class="cell" style="left:1882.1px;width:202.5px;"></div>
</div>
<div class="tr trb" style="top:1050.85px">
<div class="cell" style="left:858.8px;width:203.3px;background:#fdaa42;"></div>
<div class="cell" style="left:1064.1px;width:202.5px;background:#7bd16b;"></div>
<div class="cell" style="left:1268.6px;width:202.5px;background:#fc5a70;"></div>
<div class="cell" style="left:1473.1px;width:202.5px;"></div>
<div class="cell" style="left:1677.6px;width:202.5px;"></div>
<div class="cell" style="left:1882.1px;width:202.5px;"></div>
</div>
</div>
<div id="hscroll"></div>
<div id="vclip"><div id="vscroll"></div></div>
<!-- red annotation boxes -->
<div class="red" style="left:790px;top:280px;width:1739px;height:64px"></div>
<div class="red" style="left:784px;top:411px;width:228px;height:111px"></div>
<div class="red" style="left:75px;top:758px;width:163px;height:70px"></div>
<div id="botline"></div>
</body>
</html>
